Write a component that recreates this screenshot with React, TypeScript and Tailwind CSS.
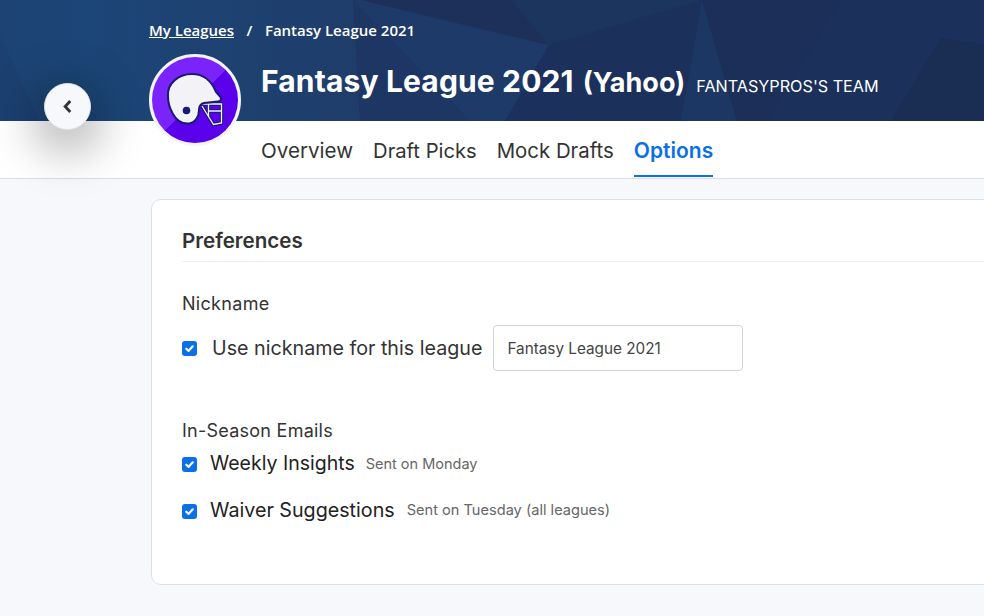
const sans = { fontFamily: 'Inter, "Liberation Sans", sans-serif' };

function Banner() {
  return (
    <svg className="absolute inset-0 h-full w-full" viewBox="0 0 984 121" preserveAspectRatio="none">
      <defs>
        <linearGradient id="bannerBg" x1="0" y1="0" x2="1" y2="0">
          <stop offset="0" stopColor="#1c4373" />
          <stop offset="0.09" stopColor="#1c4677" />
          <stop offset="0.36" stopColor="#1f3d6b" />
          <stop offset="1" stopColor="#1a2f57" />
        </linearGradient>
      </defs>
      <rect width="984" height="121" fill="url(#bannerBg)" />
      <polygon points="0,35 40,121 0,121" fill="#1c4070" />
      <polygon points="353,0 360,121 470,121" fill="#1d3663" />
      <polygon points="353,0 549,45 505,121 470,121" fill="#1d3a68" />
      <polygon points="360,0 511,0 549,45" fill="#1c3059" />
      <polygon points="511,0 702,0 549,45" fill="#1b355f" />
      <polygon points="549,45 565,121 505,121" fill="#1b305c" />
      <polygon points="549,45 702,0 681,121 565,121" fill="#1b305a" />
      <polygon points="702,0 681,121 737,121" fill="#1c3763" />
      <polygon points="702,0 842,0 767,121 737,121" fill="#1b2f58" />
      <polygon points="842,0 984,0 984,45 941,38 891,121 767,121" fill="#1b315c" />
      <polygon points="941,38 984,45 984,121 891,121" fill="#1a2d53" />
    </svg>
  );
}

function Helmet() {
  return (
    <svg className="h-full w-full" viewBox="0 0 92 92">
      <defs>
        <linearGradient id="avatarBg" x1="0" y1="0" x2="1" y2="1">
          <stop offset="0.5" stopColor="#7a24fb" />
          <stop offset="0.5" stopColor="#5a00ea" />
        </linearGradient>
      </defs>
      <circle cx="46" cy="46" r="43" fill="url(#avatarBg)" />
      <path d="M53 50 H72.5 V69 L64.5 70.5 L53 52 M59.5 50 V62 M59.5 57 H72.5" fill="none" stroke="#1b1a72" strokeWidth="3.4" strokeLinejoin="round" />
      <path d="M53 50 H72.5 V69 L64.5 70.5 L53 52 M59.5 50 V62 M59.5 57 H72.5" fill="none" stroke="#f3f2f7" strokeWidth="1.3" />
      <path
        d="M19 42 C18 29 30 20 43 20 C55 20 63 28 67 38 L71.5 43 Q73 47 69 47.5 L55 49 C51 50 50 53 50 56 C50 63 46 69 40 69.5 C32 70 27 66 24 60 C21 55 19 49 19 42 Z"
        fill="#f3f2f7"
        stroke="#1b1a72"
        strokeWidth="2"
      />
      <circle cx="37.5" cy="56.5" r="3.8" fill="#1b1a72" />
    </svg>
  );
}

function Check() {
  return (
    <span className="flex h-[15px] w-[15px] shrink-0 items-center justify-center rounded-[3px] bg-[#0a6fe8]">
      <svg viewBox="0 0 12 12" className="h-[11px] w-[11px]" fill="none" stroke="#fff" strokeWidth="2.4" strokeLinecap="round" strokeLinejoin="round">
        <path d="M2.5 6.3 L5 8.6 L9.5 3.6" />
      </svg>
    </span>
  );
}

export default function App() {
  return (
    <div className="relative h-[616px] w-full overflow-hidden bg-[#f7f8fc]" style={sans}>
      {/* Header */}
      <header className="relative h-[121px] overflow-hidden">
        <Banner />
        <div className="relative pl-[149px] pt-[20px]">
          <div className="flex items-center text-[15px] font-semibold leading-[20px] text-white" style={{ fontFamily: '"Open Sans", sans-serif' }}>
            <span className="underline">My Leagues</span>
            <span className="mx-[12.5px]">/</span>
            <span>Fantasy League 2021</span>
          </div>
          <div className="ml-[112px] mt-[20px] flex items-baseline text-white">
            <h1 className="text-[30px] font-bold leading-[42px] tracking-[0.15px]">Fantasy League 2021</h1>
            <span className="ml-[9px] text-[27px] font-bold leading-[42px]">(Yahoo)</span>
            <span className="ml-[11px] text-[16.2px] leading-[42px]">FANTASYPROS'S TEAM</span>
          </div>
        </div>
      </header>

      {/* Tabs */}
      <nav className="flex h-[58px] gap-5 border-b border-[#dcdde3] bg-white pl-[261px] text-[20.2px] leading-[60px] text-[#333]">
        <a className="text-[20.6px]">Overview</a>
        <a>Draft Picks</a>
        <a className="text-[20.4px]">Mock Drafts</a>
        <a className="h-[56px] border-b-[2px] border-[#0a6fe8] text-[21px] font-semibold text-[#0a6fe8]">Options</a>
      </nav>

      {/* Back button */}
      <button className="absolute left-[44px] top-[83px] flex h-[47px] w-[47px] items-center justify-center rounded-full border border-[#e2e3e8] bg-[#f7f8fc] shadow-[0_12px_45px_12px_rgba(0,0,0,0.28)]">
        <svg viewBox="0 0 12 16" className="h-[15px] w-[11px]" fill="none" stroke="#333" strokeWidth="3.2">
          <path d="M9 2 L3.5 8 L9 14" />
        </svg>
      </button>

      {/* Avatar */}
      <div className="absolute left-[149px] top-[54px] h-[92px] w-[92px] rounded-full border-[3px] border-[#f2f5f8] bg-[#f2f5f8]">
        <div className="-m-[3px] h-[92px] w-[92px]">
          <Helmet />
        </div>
      </div>

      <main className="pl-[151px] pt-[20px]">
        <section className="h-[386px] w-[900px] rounded-[10px] border border-[#dcdfe6] bg-white pl-[30px] pt-[26px]">
          <h2 className="h-[36px] border-b border-[#eeeff2] text-[20.6px] font-semibold leading-[30px] text-[#333]">Preferences</h2>

          <p className="mt-[30px] text-[18px] leading-[24px] tracking-[0.3px] text-[#333]">Nickname</p>
          <div className="mt-[9px] flex items-center">
            <Check />
            <span className="ml-[15px] pt-[2px] text-[19.7px] text-[#333]">Use nickname for this league</span>
            <input
              readOnly
              value="Fantasy League 2021"
              className="ml-[11px] h-[46px] w-[250px] rounded-[4px] border border-[#d3d5da] bg-white px-[13px] text-[15.3px] text-[#444]"
            />
          </div>

          <p className="mt-[48px] text-[18px] leading-[24px] tracking-[0.25px] text-[#333]">In-Season Emails</p>
          <div className="mt-[9px] flex h-[24px] items-center">
            <Check />
            <span className="ml-[13px] text-[19.5px] text-[#222]">Weekly Insights</span>
            <span className="ml-[11px] text-[14.5px] text-[#666]">Sent on Monday</span>
          </div>
          <div className="mt-[23px] flex h-[24px] items-center">
            <Check />
            <span className="ml-[13px] text-[19.7px] text-[#222]">Waiver Suggestions</span>
            <span className="ml-[12px] text-[14.6px] text-[#666]">Sent on Tuesday (all leagues)</span>
          </div>
        </section>
      </main>
    </div>
  );
}
